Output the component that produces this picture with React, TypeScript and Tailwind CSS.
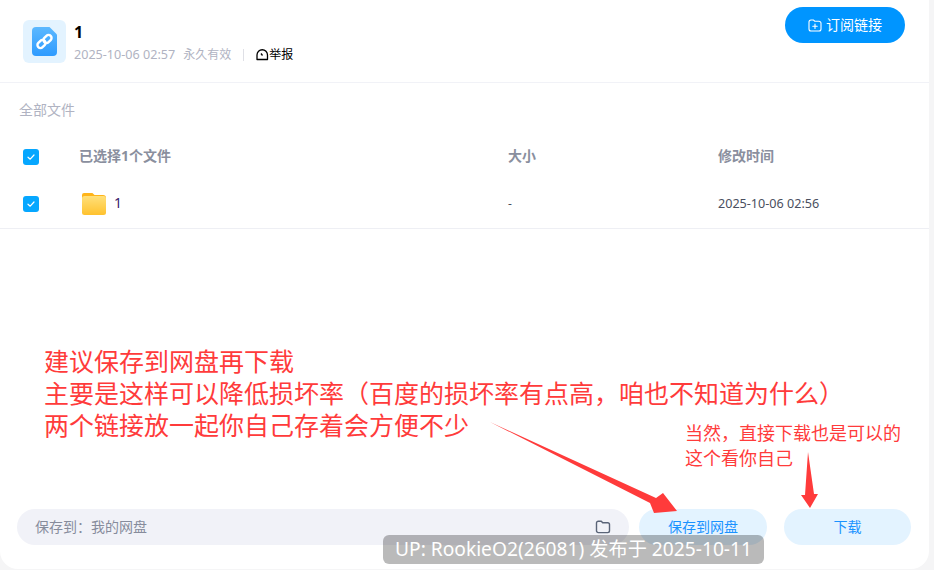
import React from 'react';

const font = { fontFamily: '"Noto Sans", "Noto Sans CJK SC", sans-serif' };

const Check: React.FC = () => (
  <div className="w-4 h-4 rounded-[3px] bg-[#06a7ff] flex items-center justify-center">
    <svg width="10" height="10" viewBox="0 0 10 10" fill="none" stroke="#fff" strokeWidth="1.2" strokeLinecap="round" strokeLinejoin="round">
      <path d="M2 5.2 4.2 7.2 8 3" />
    </svg>
  </div>
);

const FileLinkIcon: React.FC = () => (
  <div className="w-[43px] h-[43px] rounded-md bg-[#e3f3ff] flex items-center justify-center">
    <svg width="25" height="29" viewBox="0 0 25 29" fill="none">
      <defs>
        <linearGradient id="fileGrad" x1="0" y1="0" x2="0" y2="1">
          <stop offset="0" stopColor="#5cb8ff" />
          <stop offset="1" stopColor="#2e9bff" />
        </linearGradient>
      </defs>
      <path d="M4 0h13.5L25 7.5V25a4 4 0 0 1-4 4H4a4 4 0 0 1-4-4V4a4 4 0 0 1 4-4Z" fill="url(#fileGrad)" />
      <g stroke="#fff" strokeWidth="2.4" fill="none">
        <rect x="11" y="9" width="9" height="6" rx="3" transform="rotate(-45 15.5 12)" />
        <rect x="5" y="14" width="9" height="6" rx="3" transform="rotate(-45 9.5 17)" />
      </g>
    </svg>
  </div>
);

const Folder: React.FC = () => (
  <svg width="24" height="22" viewBox="0 0 24 22" fill="none">
    <defs>
      <linearGradient id="folderGrad" x1="0" y1="0" x2="0" y2="1">
        <stop offset="0" stopColor="#ffe07a" />
        <stop offset="1" stopColor="#ffc22e" />
      </linearGradient>
    </defs>
    <path d="M2 0h7.5c1 0 1.6.5 2.2 1.2L12.6 2H21a3 3 0 0 1 3 3v3H0V2a2 2 0 0 1 2-2Z" fill="#ffb419" />
    <rect x="0" y="3" width="24" height="19" rx="2.5" fill="url(#folderGrad)" />
  </svg>
);

const App: React.FC = () => {
  return (
    <div className="relative w-[934px] h-[570px] bg-[#f5f5f6] overflow-hidden" style={font}>
      <div className="w-[929px] h-[569px] bg-white rounded-b-[18px] flex flex-col">
        {/* header */}
        <div className="h-[83px] shrink-0 border-b border-[#f1f2f7] flex items-start justify-between pl-[23px] pr-6">
          <div className="flex items-start pt-5">
            <FileLinkIcon />
            <div className="ml-2">
              <div className="text-base leading-6 font-bold text-black">1</div>
              <div className="flex items-center mt-[1px] text-xs leading-5 text-[#b0b3c2]">
                <span className="text-[12.6px]">2025-10-06 02:57</span>
                <span className="ml-2">永久有效</span>
                <span className="w-px h-3 bg-[#dfe0e6] mx-3" />
                <span className="flex items-center text-black">
                  <svg width="13" height="12" viewBox="0 0 13 12" fill="none" stroke="#000" strokeWidth="1.3">
                    <path d="M1 10.5V6a5 5 0 0 1 10.5 0v4.5Z" strokeLinejoin="round" />
                    <path d="M5 4.5 6.5 6.5" />
                  </svg>
                  举报
                </span>
              </div>
            </div>
          </div>
          <button className="mt-[7px] w-[120px] h-9 rounded-full bg-[#0095ff] text-white text-sm flex items-center justify-center gap-1">
            <svg width="14" height="13" viewBox="0 0 14 13" fill="none" stroke="#fff" strokeWidth="1.1" strokeLinecap="round">
              <path d="M1 3a2 2 0 0 1 2-2h2.5l1.2 1.2H11a2 2 0 0 1 2 2V10a2 2 0 0 1-2 2H3a2 2 0 0 1-2-2Z" />
              <path d="M7 5v4.4M4.8 7.2h4.4" />
            </svg>
            订阅链接
          </button>
        </div>

        {/* file list */}
        <div className="pl-[19px] pt-[18px] text-sm leading-[18px] text-[#b0b3c2]">全部文件</div>
        <div className="flex items-center h-[46px] mt-[15px] text-sm font-bold text-[#8a8f9e]">
          <div className="w-[79px] pl-[23px]"><Check /></div>
          <div className="w-[429px] pb-[2px]">已选择1个文件</div>
          <div className="w-[210px] pb-[2px]">大小</div>
          <div className="pb-[2px]">修改时间</div>
        </div>
        <div className="flex items-center h-[49px] border-b border-[#eeeff4] text-xs text-[#4a4f60]">
          <div className="w-[79px] pl-[23px]"><Check /></div>
          <div className="w-[429px] flex items-center pl-[3px]">
            <Folder />
            <span className="ml-2 pb-[2px] text-sm text-[#3a1a6a]">1</span>
          </div>
          <div className="w-[210px]">-</div>
          <div className="text-[12.6px]">2025-10-06 02:56</div>
        </div>

        {/* save bar */}
        <div className="mt-auto mb-[24px] flex items-center pl-[17px]">
          <div className="w-[612px] h-9 rounded-[18px] bg-[#f1f2f8] flex items-center justify-between pl-[18px] pr-[18px] text-sm text-[#878c9c]">
            <span>保存到：我的网盘</span>
            <svg width="16" height="14" viewBox="0 0 16 14" fill="none" stroke="#5a6478" strokeWidth="1.4" strokeLinejoin="round">
              <path d="M1.5 3a1.8 1.8 0 0 1 1.8-1.8h3l1.4 1.6h5a1.8 1.8 0 0 1 1.8 1.8v6.2a1.8 1.8 0 0 1-1.8 1.8H3.3a1.8 1.8 0 0 1-1.8-1.8Z" />
            </svg>
          </div>
          <button className="ml-[10px] w-[128px] h-9 rounded-[18px] bg-[#e3f3ff] text-sm text-[#1a92ff]">保存到网盘</button>
          <button className="ml-[17px] w-[127px] h-9 rounded-[18px] bg-[#e3f3ff] text-sm text-[#1a92ff]">下载</button>
        </div>
      </div>

      {/* annotations drawn over the page */}
      <div className="absolute left-[44px] top-[345px] text-[25px] leading-[32px] text-[#ff3b3b] whitespace-nowrap">
        <div>建议保存到网盘再下载</div>
        <div>主要是这样可以降低损坏率（百度的损坏率有点高，咱也不知道为什么）</div>
        <div>两个链接放一起你自己存着会方便不少</div>
      </div>
      <div className="absolute left-[685px] top-[421px] text-lg leading-[25px] text-[#ff3b3b] whitespace-nowrap">
        <div>当然，直接下载也是可以的</div>
        <div>这个看你自己</div>
      </div>
      <svg className="absolute left-0 top-0 pointer-events-none" width="934" height="570" fill="#ff3b3b">
        <polygon points="490,422 656,498 663,493 677,511 654,513 650,503" />
        <polygon points="808,452 814,494 818,494 810,508 801,495 805,495" />
      </svg>
      <div className="absolute left-[383px] top-[535px] w-[381px] h-[29px] rounded-md bg-black/27 flex items-center justify-center text-[19.2px] text-white whitespace-nowrap">
        UP: RookieO2(26081) 发布于 2025-10-11
      </div>
    </div>
  );
};

export default App;
